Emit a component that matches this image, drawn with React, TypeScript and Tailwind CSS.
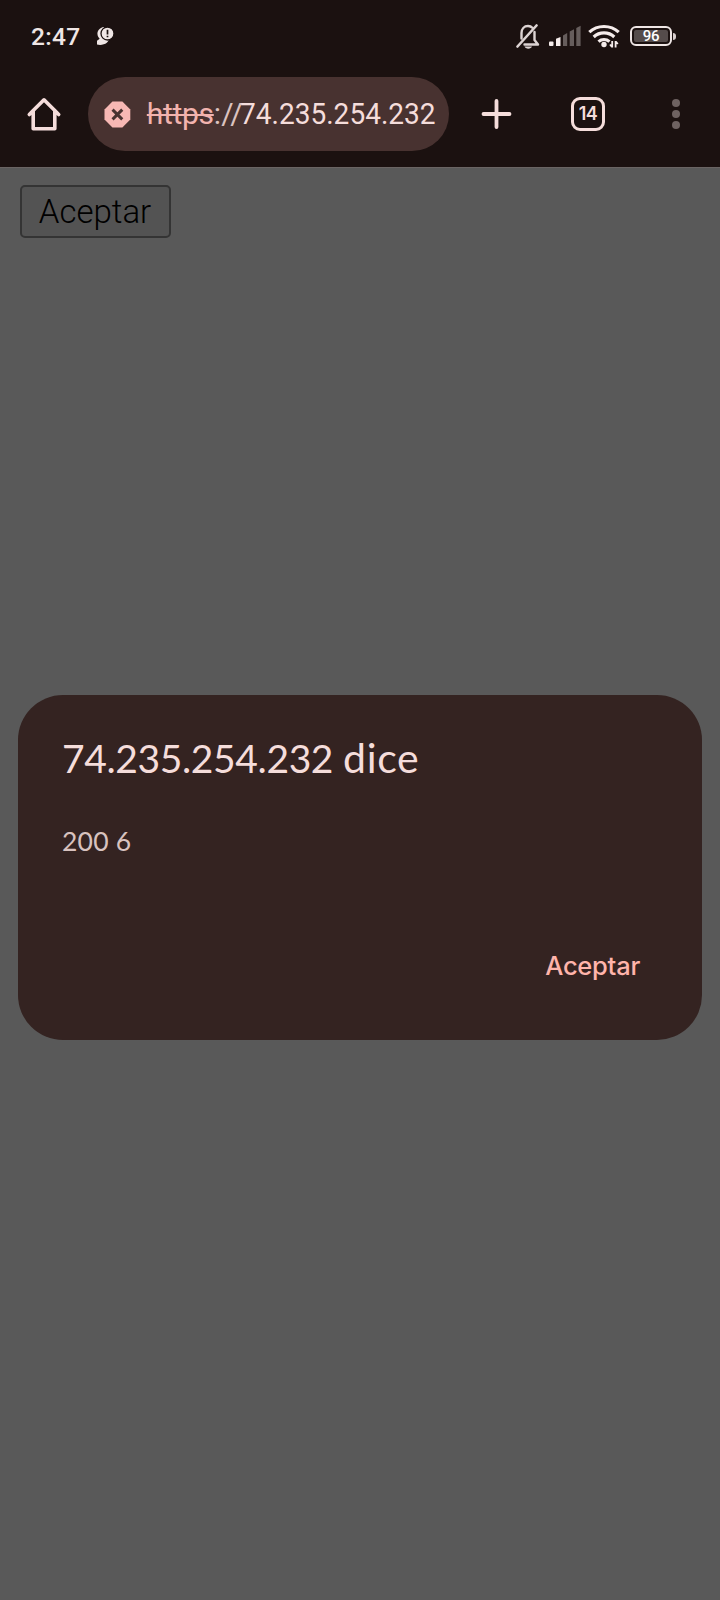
import React from "react";

function StatusBar() {
  return (
    <div className="flex h-[72px] items-start pl-[31px] text-[#efe6e5]">
      <span className="mt-[22px] w-[64px] whitespace-nowrap text-[24.5px] leading-[30px] font-medium tracking-[0.3px]">2:47</span>
      <svg className="mt-[26px]" width="20" height="20" viewBox="0 0 20 20">
        <path d="M9 1C4.500 1.500 2 5 2.500 8.500c.2 1.800 1 3 2.200 4.300L2 14.800V18.500c3 .8 7.300.4 9.800-1.700 1.500-1.300 2-2.800 2.200-4Z" fill="#efe6e5" />
        <circle cx="12.500" cy="7.500" r="6.500" fill="#efe6e5" stroke="#1b1110" strokeWidth="1.300" />
        <path d="M12.500 3.800v4.700M12.500 9.700v1.500" stroke="#1b1110" strokeWidth="1.700" />
      </svg>
      <svg className="ml-[401px] mt-[23px]" width="24" height="27" viewBox="0 0 24 27" fill="none" stroke="#ddd4d3" strokeWidth="2.400">
        <path d="M5.500 15.500V10c0-4 2.700-7 6.500-7 2 0 3.500.8 4.700 2M18.500 9v8l3.500 4.500H8.500" strokeLinejoin="round" strokeLinecap="round" />
        <path d="M1.500 23.500 20.500 2.500" strokeLinecap="round" strokeWidth="2.600" />
        <path d="M8.500 23.500h7.500c-.6 1.400-1.800 2.200-3.700 2.200s-3.200-.8-3.800-2.200Z" fill="#ddd4d3" stroke="none" />
      </svg>
      <svg className="ml-[8px] mt-[25px]" width="33" height="22" viewBox="0 0 33 22">
        <rect x="1" y="16.500" width="4.500" height="4.500" rx="1" fill="#f5eceb" />
        <path d="M8 13.800 12.500 12V21H8Z" fill="#f5eceb" />
        <path d="M15 10.500 19.200 8V21H15Z" fill="#665d5c" />
        <path d="M21.700 6.500 26 4.200V21h-4.300Z" fill="#665d5c" />
        <path d="M28.300 3 32.600.8V21h-4.300Z" fill="#665d5c" />
      </svg>
      <svg className="ml-[7px] mt-[24px]" width="32" height="24" viewBox="0 0 32 24" fill="none" stroke="#f5eceb" strokeWidth="3.200">
        <path d="M1.300 8.200c8-7.600 21.400-7.600 29.400 0" />
        <path d="M5.700 13c5.800-5.400 14.800-5.400 20.600 0" />
        <path d="M10.500 17.600c3.200-2.700 7.800-2.700 11 0" />
        <circle cx="16" cy="20.500" r="2.700" fill="#f5eceb" stroke="none" />
        <path d="M24.200 17v6.500M22 20.500l1.800 2.300M27.600 23.500V17M29.800 20l-1.800-2.300" strokeWidth="1.800" />
      </svg>
      <div className="ml-[10px] mt-[26px] flex items-center">
        <div className="flex h-[20px] w-[42px] rounded-[6px] border-2 border-[#efe6e5] p-[2px]">
          <div className="flex flex-1 items-center justify-center rounded-[2px] bg-[#554c4b] text-[15px] leading-none font-medium tracking-[-0.2px] text-white">96</div>
        </div>
        <div className="ml-[1px] h-[7px] w-[3px] rounded-r-sm bg-[#d9cfce]" />
      </div>
    </div>
  );
}

function Toolbar() {
  return (
    <div className="flex h-[95px] items-start">
      <svg className="ml-[26px] mt-[24px]" width="36" height="36" viewBox="0 0 36 36" fill="none" stroke="#f5dddb" strokeWidth="3.600" strokeLinecap="round" strokeLinejoin="round">
        <path d="m3.300 18.500 3.900-3.900L18 3.800l10.800 10.800 3.900 3.900M7.200 15v17.700h21.600V15" />
      </svg>
      <div className="ml-[26px] mt-[5px] flex h-[74px] w-[361px] items-center rounded-full bg-[#483230] pl-[16px]">
        <svg width="27" height="27" viewBox="0 0 27 27">
          <path d="M8.500.5h10l8 8v10l-8 8h-10l-8-8v-10Z" fill="#f7b8b4" />
          <path d="m8.600 8.600 9.800 9.800m0-9.800-9.800 9.800" stroke="#483230" strokeWidth="3" />
        </svg>
        <div className="ml-[16px] flex whitespace-nowrap text-[30px] leading-[36px] text-[#f5dddb]">
          <span className="w-[67px] tracking-[-0.3px] text-[#f2b3ae] line-through decoration-2">https</span>
          <span className="w-[26px] tracking-[0.1px] text-[#dcc2bf]">://</span>
          <span className="origin-left scale-x-[0.935]">74.235.254.232</span>
        </div>
      </div>
      <svg className="ml-[32px] mt-[26px]" width="32" height="32" viewBox="0 0 32 32" stroke="#f5dddb" strokeWidth="3.800" strokeLinecap="round">
        <path d="M15.500 3v26M2.500 16h26" />
      </svg>
      <div className="ml-[58px] mt-[25px] flex h-[34px] w-[34px] items-center justify-center rounded-[9px] border-[3.500px] border-[#f5dddb] font-['Inter',sans-serif] text-[18px] leading-none font-semibold tracking-[-0.5px] text-[#f5dddb]">14</div>
      <div className="ml-[67px] mt-[27px] flex flex-col gap-[3px]">
        <div className="size-[8px] rounded-full bg-[#6e6261]" />
        <div className="size-[8px] rounded-full bg-[#6e6261]" />
        <div className="size-[8px] rounded-full bg-[#6e6261]" />
      </div>
    </div>
  );
}

export default function App() {
  return (
    <div className="flex h-[1600px] w-[720px] flex-col overflow-hidden bg-[#595959] font-['Roboto',sans-serif]">
      <header className="bg-[#1b1110]">
        <StatusBar />
        <Toolbar />
      </header>
      <main className="flex flex-col border-t border-[#6a6463] pt-[17px]">
        <button className="ml-[19.5px] h-[53px] w-[151px] rounded-[5px] border-2 border-[#343434] bg-[#535353] text-[33px] leading-[46px] font-light text-black">Aceptar</button>
        <section className="mt-[457px] ml-[18px] flex h-[345px] w-[684px] flex-col rounded-[45px] bg-[#342321] pr-[62px] pl-[44px] font-['Lato',sans-serif]">
          <h1 className="mt-[39px] flex items-baseline text-[39px] leading-[48px] whitespace-nowrap text-[#f5dddb]">
            <span className="w-[281px] tracking-[-0.38px]">74.235.254.232 </span>
            <span className="text-[41px] tracking-[0.7px]">dice</span>
          </h1>
          <p className="mt-[43px] text-[26.5px] leading-[32px] tracking-[0.2px] text-[#d8c2bf]">200 6</p>
          <button className="mt-[93px] self-end font-['Inter',sans-serif] text-[25.5px] leading-[32px] font-medium tracking-[-0.25px] text-[#ffb4ab]">Aceptar</button>
        </section>
      </main>
    </div>
  );
}
